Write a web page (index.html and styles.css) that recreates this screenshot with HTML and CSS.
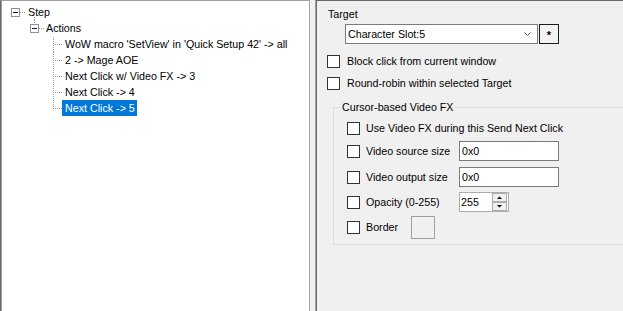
FILE: index.html
```html
<!DOCTYPE html>
<html>
<head>
<meta charset="utf-8">
<link rel="stylesheet" href="styles.css">
</head>
<body>
<div class="app">
  <div class="tree">
    <div class="row">
      <svg class="gut" width="24" height="16" viewBox="1 0 24 16">
        <rect x="11.5" y="4.5" width="8" height="8" fill="#fff" stroke="#919191"/>
        <line x1="13" y1="8.5" x2="18" y2="8.5" stroke="#1e1e1e"/>
        <line x1="20" y1="8.5" x2="26" y2="8.5" class="dot"/>
        <line x1="34.5" y1="13" x2="34.5" y2="16" class="dot"/>
      </svg>
      <span class="lbl">Step</span>
    </div>
    <div class="row">
      <svg class="gut" width="42" height="16" viewBox="1 0 42 16">
        <line x1="34.5" y1="0" x2="34.5" y2="4" class="dot"/>
        <rect x="30.5" y="4.5" width="8" height="8" fill="#fff" stroke="#919191"/>
        <line x1="32" y1="8.5" x2="37" y2="8.5" stroke="#1e1e1e"/>
        <line x1="39" y1="8.5" x2="45" y2="8.5" class="dot"/>
      </svg>
      <span class="lbl">Actions</span>
    </div>
    <div class="row">
      <svg class="gut" width="61" height="16" viewBox="1 0 61 16">
        <line x1="53.5" y1="1" x2="53.5" y2="16" class="dot"/>
        <line x1="55" y1="8.5" x2="62" y2="8.5" class="dot"/>
      </svg>
      <span class="lbl">WoW macro 'SetView' in 'Quick Setup 42' -&gt; all</span>
    </div>
    <div class="row">
      <svg class="gut" width="61" height="16" viewBox="1 0 61 16">
        <line x1="53.5" y1="0" x2="53.5" y2="16" class="dot"/>
        <line x1="55" y1="8.5" x2="62" y2="8.5" class="dot"/>
      </svg>
      <span class="lbl">2 -&gt; Mage AOE</span>
    </div>
    <div class="row">
      <svg class="gut" width="61" height="16" viewBox="1 0 61 16">
        <line x1="53.5" y1="0" x2="53.5" y2="16" class="dot"/>
        <line x1="55" y1="8.5" x2="62" y2="8.5" class="dot"/>
      </svg>
      <span class="lbl">Next Click w/ Video FX -&gt; 3</span>
    </div>
    <div class="row">
      <svg class="gut" width="61" height="16" viewBox="1 0 61 16">
        <line x1="53.5" y1="0" x2="53.5" y2="16" class="dot"/>
        <line x1="55" y1="8.5" x2="62" y2="8.5" class="dot"/>
      </svg>
      <span class="lbl">Next Click -&gt; 4</span>
    </div>
    <div class="row">
      <svg class="gut" width="61" height="16" viewBox="1 0 61 16">
        <line x1="53.5" y1="0" x2="53.5" y2="9" class="dot"/>
        <line x1="55" y1="8.5" x2="62" y2="8.5" class="dot"/>
      </svg>
      <span class="lbl sel">Next Click -&gt; 5</span>
    </div>
  </div>
  <div class="split"></div>
  <div class="panel">
    <div class="target-lbl">Target</div>
    <div class="combo-row">
      <div class="combo">
        <span class="combo-text">Character Slot:5</span>
        <svg class="chev" width="7" height="4" viewBox="0 0 7 4"><polyline points="0.5,0.5 3.5,3.5 6.5,0.5" fill="none" stroke="#606060"/></svg>
      </div>
      <div class="star">*</div>
    </div>
    <div class="chk-row first"><span class="cb"></span><span>Block click from current window</span></div>
    <div class="chk-row second"><span class="cb"></span><span>Round-robin within selected Target</span></div>
    <div class="group">
      <div class="gtitle">Cursor-based Video FX</div>
      <div class="grow gr1"><span class="cb"></span><span>Use Video FX during this Send Next Click</span></div>
      <div class="grow gr2"><span class="cb"></span><span class="flabel">Video source size</span><div class="tb">0x0</div></div>
      <div class="grow gr3"><span class="cb"></span><span class="flabel">Video output size</span><div class="tb">0x0</div></div>
      <div class="grow gr4"><span class="cb"></span><span class="flabel">Opacity (0-255)</span>
        <div class="num"><span class="num-text">255</span>
          <svg class="spin" width="15" height="18" viewBox="0 0 15 18">
            <rect x="0.5" y="0.5" width="14" height="8" fill="#f0f0f0" stroke="#adadad"/>
            <rect x="0.5" y="9.5" width="14" height="8" fill="#f0f0f0" stroke="#adadad"/>
            <polygon points="5,6 10,6 7.5,3.5" fill="#000"/>
            <polygon points="5,12 10,12 7.5,14.5" fill="#000"/>
          </svg>
        </div>
      </div>
      <div class="grow gr5"><span class="cb"></span><span class="blabel">Border</span><div class="color"></div></div>
    </div>
  </div>
</div>
</body>
</html>
```
FILE: styles.css
```css
* { box-sizing: border-box; }
html, body {
  margin: 0;
  padding: 0;
  background: #f0f0f0;
  overflow: hidden;
}
body {
  width: 623px;
  height: 311px;
  font-family: "Liberation Sans", Arial, sans-serif;
  font-size: 10.7px;
  color: #000;
}
.app {
  display: flex;
  height: 311px;
}
.tree {
  width: 310px;
  flex: none;
  background: #fff;
  border-left: 1px solid #696969;
  border-top: 1px solid #a0a0a0;
  border-right: 1px solid #a0a0a0;
  box-shadow: inset 1px 0 0 #a0a0a0;
  padding-top: 3px;
}
.row {
  display: flex;
  height: 16px;
  align-items: stretch;
}
.gut {
  flex: none;
  overflow: visible;
  display: block;
}
.dot {
  stroke: #a0a0a0;
  stroke-dasharray: 1 1;
}
.lbl {
  line-height: 16px;
  padding: 0 2px 0 3px;
  white-space: nowrap;
}
.lbl.sel {
  background: #0078d7;
  color: #fff;
}
.split {
  width: 5px;
  flex: none;
}
.panel {
  flex: 1;
  border-left: 1px solid #a0a0a0;
  border-top: 1px solid #696969;
  box-shadow: inset 1px 0 0 #696969;
  padding-left: 11px;
  overflow: hidden;
  display: flex;
  flex-direction: column;
  align-items: flex-start;
}
.target-lbl {
  margin-top: 7px;
  line-height: 13px;
  padding-left: 1px;
}
.combo-row {
  display: flex;
  margin-top: 3px;
  margin-left: 18px;
  height: 20px;
}
.combo {
  width: 193px;
  height: 20px;
  background: #fff;
  border: 1px solid #7a7a7a;
  display: flex;
  align-items: center;
  padding-left: 2px;
}
.combo-text { flex: 1; line-height: 13px; }
.chev { margin-right: 6px; display: block; }
.star {
  width: 20px;
  height: 20px;
  margin-left: 1px;
  border: 1px solid #1a1a1a;
  background: #f3f3f3;
  display: flex;
  align-items: center;
  justify-content: center;
  font-size: 11px;
  font-weight: bold;
  line-height: 13px;
  padding-top: 3px;
}
.chk-row {
  display: flex;
  align-items: center;
  height: 13px;
  line-height: 13px;
  white-space: nowrap;
}
.chk-row.first { margin-top: 11px; }
.chk-row.second { margin-top: 9px; }
.cb {
  width: 13px;
  height: 13px;
  flex: none;
  background: #fff;
  border: 1px solid #333;
  margin-right: 7px;
}
.group {
  margin-top: 17px;
  margin-left: 6px;
  width: 320px;
  border: 1px solid #dcdcdc;
  padding: 0 0 5px 13px;
  display: flex;
  flex-direction: column;
  align-items: flex-start;
}
.gtitle {
  margin: -7px 0 0 -6px;
  padding: 0 1px;
  line-height: 13px;
  background: #f0f0f0;
}
.grow {
  display: flex;
  align-items: center;
  white-space: nowrap;
  line-height: 13px;
}
.grow .cb { margin-right: 6px; }
.gr1 { margin-top: 8px; height: 13px; }
.gr2 { margin-top: 6px; height: 20px; }
.gr3 { margin-top: 6px; height: 20px; }
.gr4 { margin-top: 5px; height: 20px; }
.gr5 { margin-top: 4px; height: 23px; }
.flabel { width: 93px; }
.blabel { width: 45px; }
.tb {
  width: 100px;
  height: 20px;
  background: #fff;
  border: 1px solid #7a7a7a;
  padding-left: 2px;
  line-height: 18px;
}
.num {
  width: 50px;
  height: 20px;
  background: #fff;
  border: 1px solid #acacac;
  display: flex;
  align-items: center;
  padding-left: 1px;
}
.num-text { flex: 1; line-height: 13px; }
.spin { display: block; margin-right: 1px; }
.color {
  width: 24px;
  height: 23px;
  border: 1px solid #a0a0a0;
  background: #f0f0f0;
}
```
